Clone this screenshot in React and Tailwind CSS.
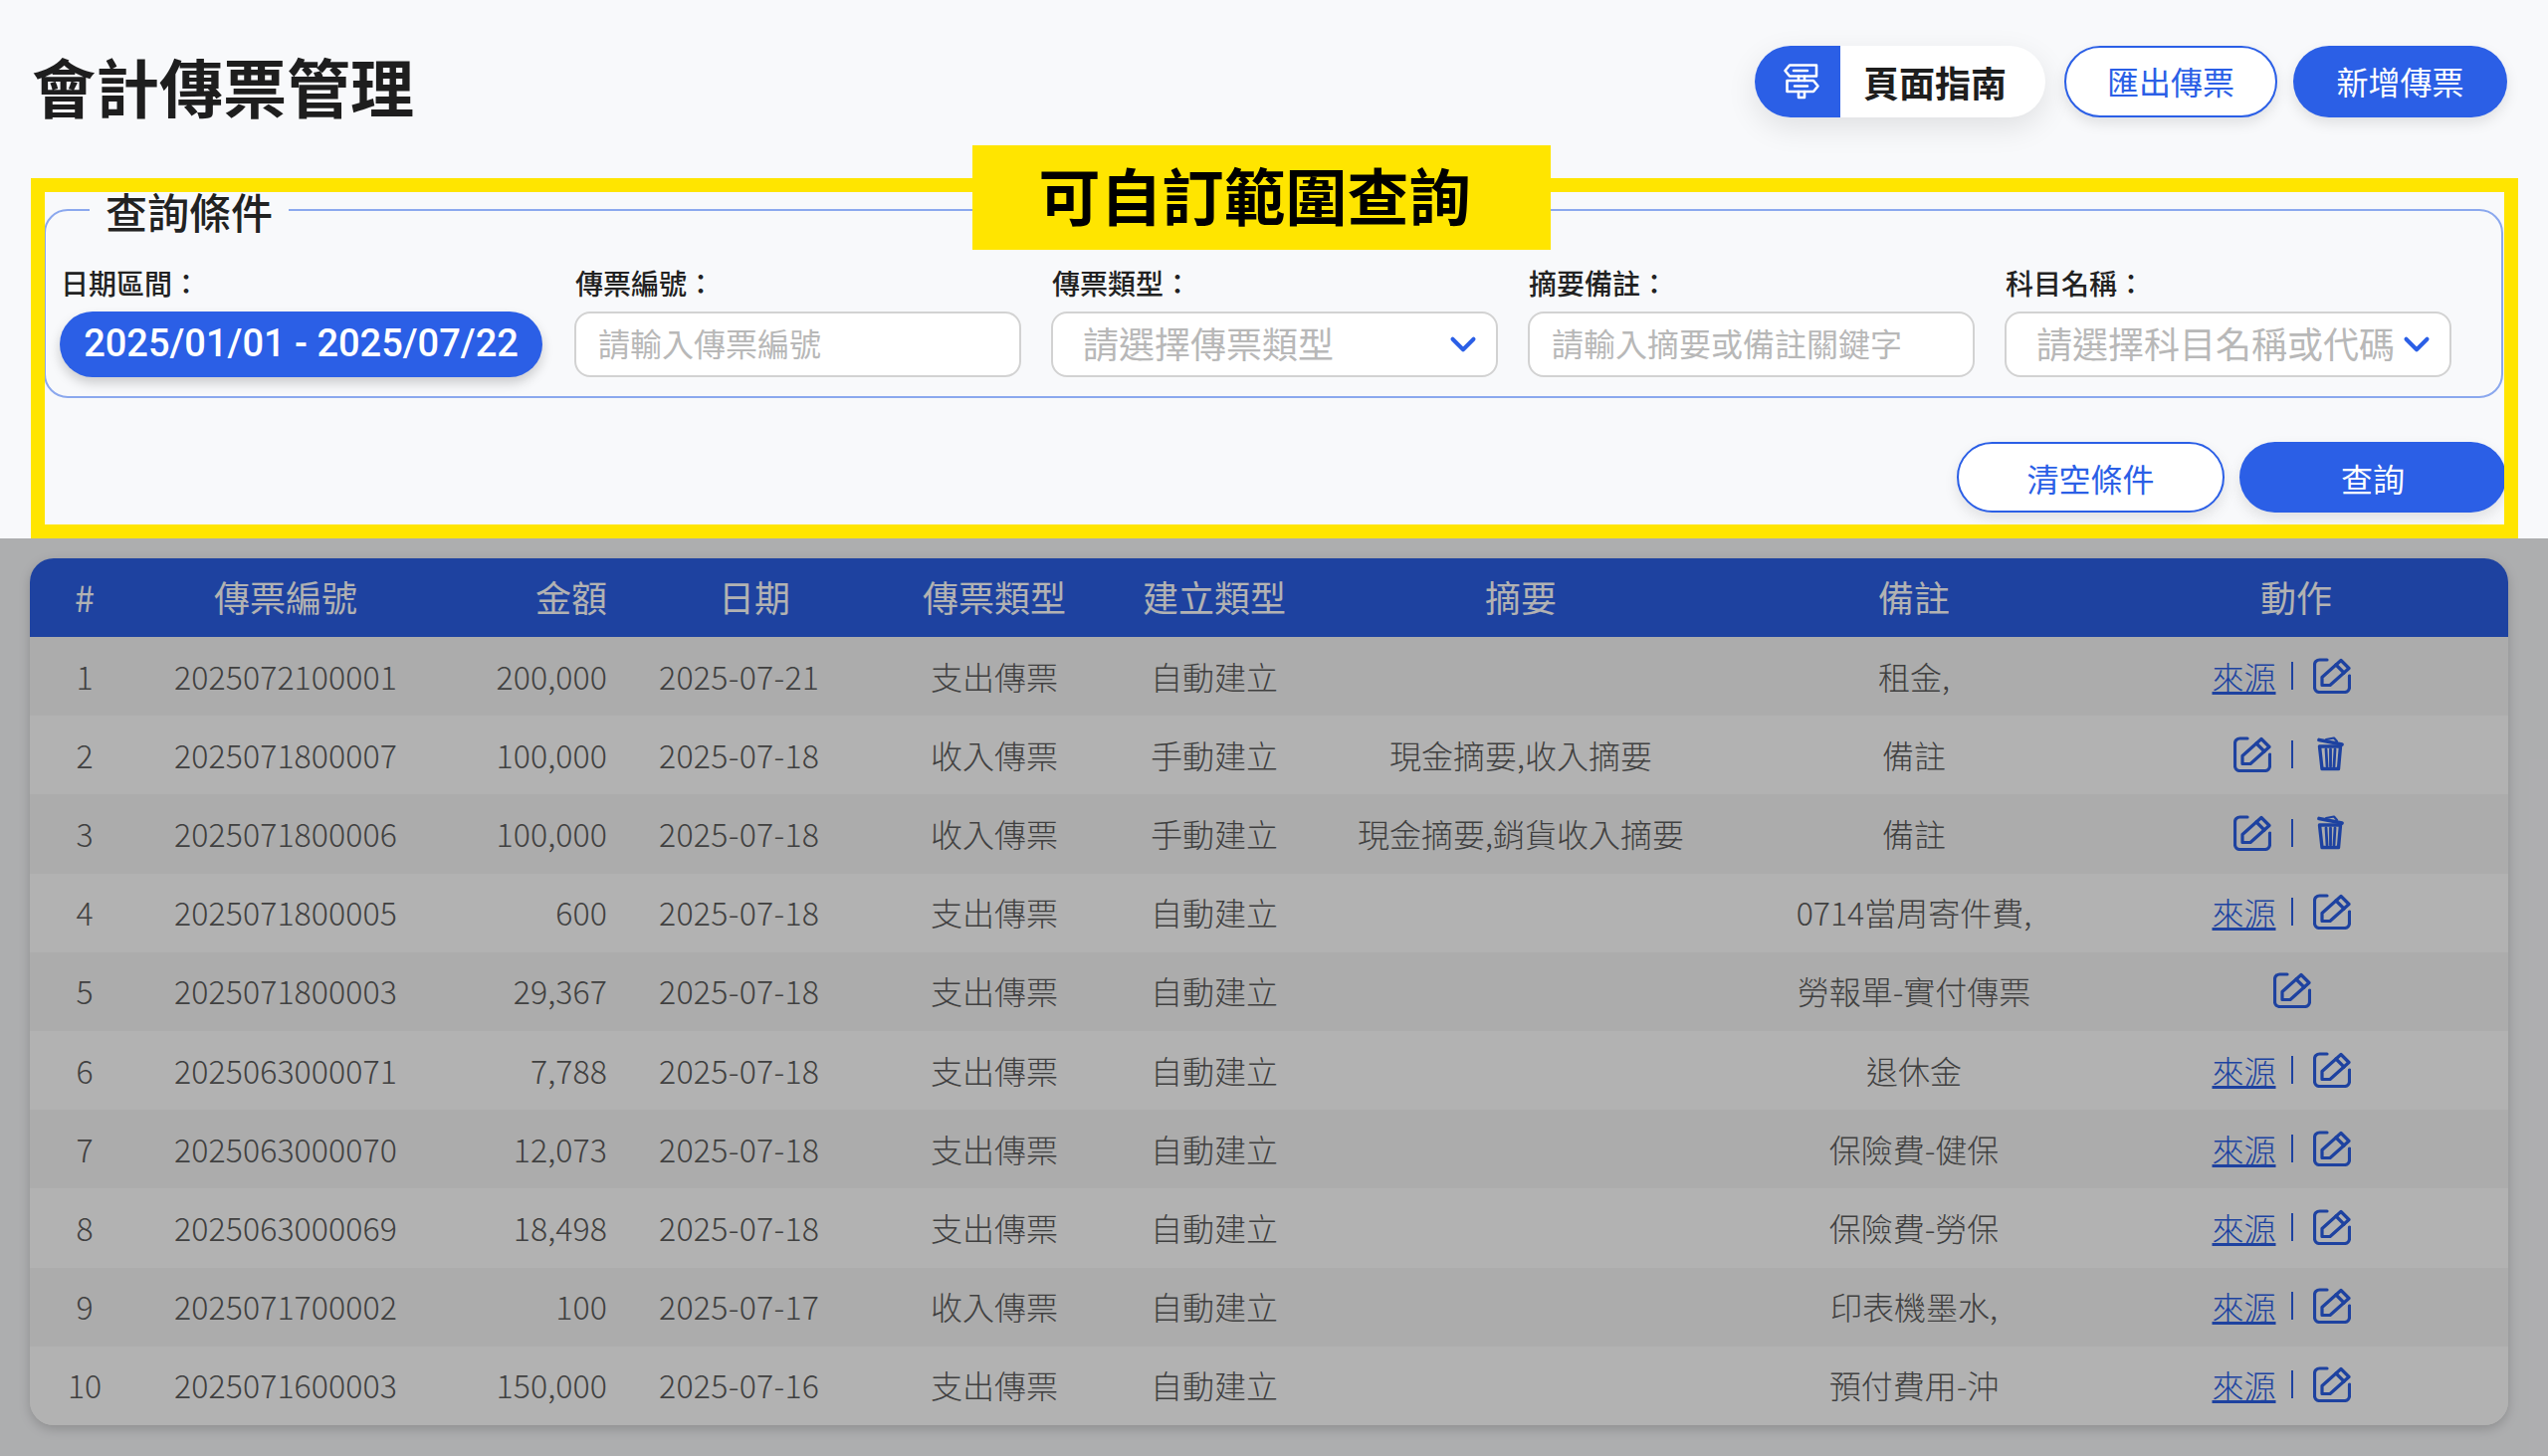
import React from 'react';
import { ChevronDown } from 'lucide-react';

const rows = [
  ['1', '2025072100001', '200,000', '2025-07-21', '支出傳票', '自動建立', '', '租金,', 'se'],
  ['2', '2025071800007', '100,000', '2025-07-18', '收入傳票', '手動建立', '現金摘要,收入摘要', '備註', 'ed'],
  ['3', '2025071800006', '100,000', '2025-07-18', '收入傳票', '手動建立', '現金摘要,銷貨收入摘要', '備註', 'ed'],
  ['4', '2025071800005', '600', '2025-07-18', '支出傳票', '自動建立', '', '0714當周寄件費,', 'se'],
  ['5', '2025071800003', '29,367', '2025-07-18', '支出傳票', '自動建立', '', '勞報單-實付傳票', 'e'],
  ['6', '2025063000071', '7,788', '2025-07-18', '支出傳票', '自動建立', '', '退休金', 'se'],
  ['7', '2025063000070', '12,073', '2025-07-18', '支出傳票', '自動建立', '', '保險費-健保', 'se'],
  ['8', '2025063000069', '18,498', '2025-07-18', '支出傳票', '自動建立', '', '保險費-勞保', 'se'],
  ['9', '2025071700002', '100', '2025-07-17', '收入傳票', '自動建立', '', '印表機墨水,', 'se'],
  ['10', '2025071600003', '150,000', '2025-07-16', '支出傳票', '自動建立', '', '預付費用-沖', 'se'],
];

function EditIcon() {
  return (
    <svg width="38" height="36" viewBox="0 0 38 36" fill="none" stroke="#2b5fe6" strokeWidth="3.2" strokeLinejoin="round" strokeLinecap="round" className="block shrink-0">
      <path d="M14 2H6.500A5 5 0 0 0 1.500 7V29.500A5 5 0 0 0 6.500 34.500H31.500A5 5 0 0 0 36.500 29.500V18" />
      <path d="M9 19.500L28 2.500L36 10.500L17 27.500H9Z" />
      <path d="M23 7L31 15" />
    </svg>
  );
}

function TrashIcon() {
  return (
    <svg width="38" height="36" viewBox="0 0 38 36" fill="none" stroke="#2b5fe6" strokeWidth="3.400" strokeLinecap="round" strokeLinejoin="round" className="block shrink-0">
      <path d="M6 3.500L29 8" strokeWidth="3.800" />
      <path d="M13 3L21 1.500L24 5" strokeWidth="2.200" />
      <path d="M6.500 10H27.500L25.500 32.500H9Z" />
      <path d="M13 13L14 30M17.500 13V30M22 13L21 30" strokeWidth="2.800" />
    </svg>
  );
}

function GuideIcon() {
  return (
    <svg width="60" height="55" viewBox="0 0 60 55" fill="none" stroke="#ffffff" strokeWidth="2.600" strokeLinejoin="round" strokeLinecap="round" className="block shrink-0">
      <path d="M18 10.500H45V21.500H18L13.500 16Z" />
      <path d="M15.500 26H42L46.500 31.500L42 37H15.500Z" />
      <path d="M27 21.500V26M33 21.500V26M27 37V43H33V37" />
      <path d="M22 16H36M23 31.500H36" />
    </svg>
  );
}

function Actions({ kind }) {
  if (kind === 'e') {
    return (
      <div className="flex justify-center">
        <EditIcon />
      </div>
    );
  }
  return (
    <div className="grid grid-cols-[1fr_2px_1fr] items-center">
      <div className="flex justify-end pr-[15px]">
        {kind === 'se' ? (
          <a className="text-[#2b5fe6] underline text-[32px] leading-[40px]">來源</a>
        ) : (
          <span className="pr-[5px]"><EditIcon /></span>
        )}
      </div>
      <div className="w-[2px] h-[28px] bg-[#2b5fe6]" />
      <div className="flex justify-start pl-[20px]">
        {kind === 'se' ? <EditIcon /> : <TrashIcon />}
      </div>
    </div>
  );
}

function Field({ label, children, className }) {
  return (
    <div className={className}>
      <div className="text-[28px] leading-[40px] text-[#222] font-medium pl-[1px] mb-[9px] whitespace-nowrap">{label}</div>
      {children}
    </div>
  );
}

function TextInput({ placeholder }) {
  return (
    <input
      placeholder={placeholder}
      className="block w-full h-[66px] pl-[22px] pb-[4px] bg-white border-2 border-[#d2d2d2] rounded-[16px] text-[32px] placeholder:text-[#b8b8b8] outline-none"
    />
  );
}

function SelectBox({ text }) {
  return (
    <div className="flex items-center justify-between w-full h-[66px] pl-[30px] pr-[12px] bg-white border-2 border-[#d2d2d2] rounded-[16px]">
      <span className="text-[36px] text-[#b8b8b8] whitespace-nowrap pb-[5px]">{text}</span>
      <ChevronDown size={42} strokeWidth={2.300} color="#2b5fe6" className="shrink-0" />
    </div>
  );
}

export default function App() {
  return (
    <div className="relative w-[2560px] h-[1463px] overflow-hidden bg-[#f8f9fb] font-['Noto_Sans_CJK_TC','Noto_Sans_CJK_SC',sans-serif]">
      <header className="flex justify-between items-start pt-[46px] pl-[32px] pr-[41px]">
        <h1 className="mt-[7px] text-[64px] leading-[64px] font-bold text-[#1e1e1e]">會計傳票管理</h1>
        <div className="flex items-center gap-[16px]">
          <div className="flex h-[72px] w-[292px] rounded-full bg-white shadow-[0_10px_30px_rgba(0,0,0,0.1)] overflow-hidden mr-[3px]">
            <div className="flex items-center w-[86px] h-full bg-[#2b5fe6] pl-[17px]">
              <GuideIcon />
            </div>
            <div className="flex items-center pl-[23px] text-[36px] font-bold text-[#1e1e1e]">頁面指南</div>
          </div>
          <button className="w-[214px] h-[72px] pb-[2px] rounded-full bg-white border-2 border-[#2b5fe6] text-[#2b5fe6] text-[32px] shadow-[0_6px_14px_rgba(0,0,0,0.1)]">匯出傳票</button>
          <button className="w-[215px] h-[72px] pb-[2px] rounded-full bg-[#2b5fe6] text-white text-[32px] shadow-[0_6px_14px_rgba(0,0,0,0.1)]">新增傳票</button>
        </div>
      </header>

      <section className="pl-[44px] pr-[45px]">
        <fieldset className="mt-[63px] border-2 border-[#8ba8ee] rounded-[24px] pl-[14px] pb-[19px] min-w-0">
          <legend className="ml-[30px] px-[16px] pt-[3px] text-[42px] leading-[56px] text-[#222] font-medium">查詢條件</legend>
          <div className="flex gap-[30px] pt-[24px]">
            <Field label="日期區間：" className="w-[485px] mr-[2px]">
              <button className="block w-full h-[66px] pb-[2px] rounded-full bg-[#2b5fe6] text-white text-[38px] font-['Roboto',sans-serif] font-medium shadow-[0_6px_12px_rgba(0,0,0,0.18)]">2025/01/01 - 2025/07/22</button>
            </Field>
            <Field label="傳票編號：" className="w-[449px]"><TextInput placeholder="請輸入傳票編號" /></Field>
            <Field label="傳票類型：" className="w-[449px]"><SelectBox text="請選擇傳票類型" /></Field>
            <Field label="摘要備註：" className="w-[449px]"><TextInput placeholder="請輸入摘要或備註關鍵字" /></Field>
            <Field label="科目名稱：" className="w-[449px]"><SelectBox text="請選擇科目名稱或代碼" /></Field>
          </div>
        </fieldset>
        <div className="flex justify-end gap-[15px] mt-[44px] mr-[-3px]">
          <button className="w-[269px] h-[71px] rounded-full bg-white border-2 border-[#2b5fe6] text-[#2b5fe6] text-[32px] shadow-[0_6px_14px_rgba(0,0,0,0.1)]">清空條件</button>
          <button className="w-[268px] h-[71px] rounded-full bg-[#2b5fe6] text-white text-[32px] shadow-[0_6px_14px_rgba(0,0,0,0.1)]">查詢</button>
        </div>
      </section>

      <div className="ml-[30px] mr-[40px] mt-[46px] rounded-[24px] overflow-hidden bg-white shadow-[0_4px_12px_rgba(0,0,0,0.18)]">
        <table className="w-full table-fixed border-collapse">
          <thead>
            <tr className="h-[79px] bg-[#2b5fe6] text-white text-[36px]">
              <th className="w-[110px] font-normal text-center pb-[3px]">#</th>
              <th className="w-[294px] font-normal text-center pb-[3px]">傳票編號</th>
              <th className="w-[200px] font-normal text-right pr-[24px] pb-[3px]">金額</th>
              <th className="w-[248px] font-normal text-center pb-[3px]">日期</th>
              <th className="w-[234px] font-normal text-center pb-[3px]">傳票類型</th>
              <th className="w-[208px] font-normal text-center pb-[3px]">建立類型</th>
              <th className="w-[408px] font-normal text-center pb-[3px]">摘要</th>
              <th className="w-[382px] font-normal text-center pb-[3px]">備註</th>
              <th className="font-normal text-center pr-[20px] pb-[3px]">動作</th>
            </tr>
          </thead>
          <tbody className="text-[32px] text-[#5c5c5c] font-light">
            {rows.map((r) => (
              <tr key={r[0]} className="h-[79.2px] odd:bg-[#f6f6f6] even:bg-white">
                <td className="text-center pb-[2px]">{r[0]}</td>
                <td className="text-center pb-[2px] tracking-[0.1px]">{r[1]}</td>
                <td className="text-right pr-[24px] pb-[2px] tracking-[0.1px]">{r[2]}</td>
                <td className="text-left pl-[28px] pb-[2px] tracking-[0.3px]">{r[3]}</td>
                <td className="text-center pb-[2px]">{r[4]}</td>
                <td className="text-center pb-[2px]">{r[5]}</td>
                <td className="text-center pb-[2px]">{r[6]}</td>
                <td className="text-center pb-[2px]">{r[7]}</td>
                <td className="pr-[29px] pb-[2px]"><Actions kind={r[8]} /></td>
              </tr>
            ))}
          </tbody>
        </table>
      </div>

      <div className="absolute inset-x-0 top-[541px] bottom-0 bg-black/30" />
      <div className="absolute left-[31px] top-[179px] w-[2499px] h-[362px] border-[14px] border-[#ffe500]" />
      <div className="absolute left-[977px] top-[146px] w-[581px] h-[105px] pr-[14px] pb-[6px] bg-[#ffe500] flex items-center justify-center text-[62px] font-bold text-black">可自訂範圍查詢</div>
    </div>
  );
}
